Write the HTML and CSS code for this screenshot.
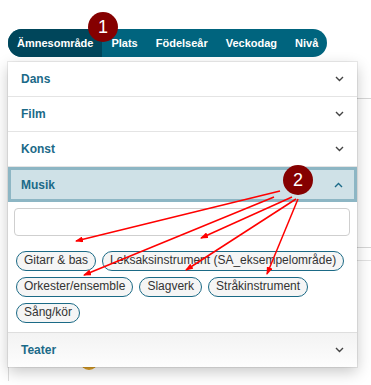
FILE: index.html
```html
<!DOCTYPE html>
<html lang="sv">
<head>
    <meta charset="UTF-8">
    <meta name="viewport" content="width=device-width, initial-scale=1.0">
    <title>Filter</title>
    <link rel="stylesheet" href="styles.css">
</head>
<body>

    <nav class="tabs">
        <span class="tab active">Ämnesområde</span>
        <span class="tab">Plats</span>
        <span class="tab">Födelseår</span>
        <span class="tab">Veckodag</span>
        <span class="tab">Nivå</span>
    </nav>

    <!-- page content behind the dropdown -->
    <div class="content">
        <div class="content-row first"></div>
        <div class="content-row second"></div>
        <div class="content-row third"></div>
        <div class="content-foot"><span class="avatar"></span></div>
    </div>

    <div class="dropdown">
        <div class="acc-head">
            <span>Dans</span>
            <svg class="chev" width="9" height="6" viewBox="0 0 9 6"><polyline points="1,1 4.5,4.5 8,1"/></svg>
        </div>
        <div class="acc-head">
            <span>Film</span>
            <svg class="chev" width="9" height="6" viewBox="0 0 9 6"><polyline points="1,1 4.5,4.5 8,1"/></svg>
        </div>
        <div class="acc-head">
            <span>Konst</span>
            <svg class="chev" width="9" height="6" viewBox="0 0 9 6"><polyline points="1,1 4.5,4.5 8,1"/></svg>
        </div>
        <div class="acc-head open">
            <span>Musik</span>
            <svg class="chev" width="9" height="6" viewBox="0 0 9 6"><polyline points="1,5 4.5,1.5 8,5"/></svg>
        </div>
        <div class="acc-body">
            <input class="search" type="text">
            <div class="chips">
                <span class="chip">Gitarr &amp; bas</span>
                <span class="chip">Leksaksinstrument (SA_eksempelområde)</span>
                <span class="chip">Orkester/ensemble</span>
                <span class="chip">Slagverk</span>
                <span class="chip">Stråkinstrument</span>
                <span class="chip">Sång/kör</span>
            </div>
        </div>
        <div class="acc-head last">
            <span>Teater</span>
            <svg class="chev" width="9" height="6" viewBox="0 0 9 6"><polyline points="1,1 4.5,4.5 8,1"/></svg>
        </div>
    </div>

    <!-- annotations -->
    <svg class="arrows" width="371" height="385" viewBox="0 0 371 385">
        <defs>
            <marker id="head" markerWidth="8" markerHeight="6" refX="7" refY="3" orient="auto" markerUnits="userSpaceOnUse">
                <polygon points="0,0 8,3 0,6" fill="#ff0000"/>
            </marker>
        </defs>
        <line x1="280" y1="191" x2="76" y2="241" marker-end="url(#head)"/>
        <line x1="274" y1="197" x2="84" y2="275" marker-end="url(#head)"/>
        <line x1="292" y1="197" x2="201" y2="238" marker-end="url(#head)"/>
        <line x1="296" y1="199" x2="186" y2="270" marker-end="url(#head)"/>
        <line x1="298" y1="199" x2="267" y2="274" marker-end="url(#head)"/>
    </svg>
    <span class="badge one">1</span>
    <span class="badge two">2</span>

</body>
</html>
```

FILE: styles.css
```css
body {
    margin: 0;
    width: 371px;
    height: 385px;
    overflow: hidden;
    position: relative;
    background-color: #fff;
    font-family: "Liberation Sans", Arial, sans-serif;
}

/* Top tab bar */
.tabs {
    display: inline-flex;
    margin: 29px 0 0 8px;
    height: 28px;
    border-radius: 14px;
    overflow: hidden;
    background-color: #00647e;
}

.tab {
    padding: 0 9px;
    line-height: 28px;
    color: #fff;
    font-size: 11px;
    font-weight: bold;
}

.tab.active {
    background-color: #00465b;
}

/* Content behind the dropdown */
.content {
    margin: 5px 0 0 8px;
    border-left: 1px solid #dcdcdc;
}

.content-row {
    border-bottom: 1px solid #d6d6d6;
}

.content-row.first { height: 36px; }
.content-row.second { height: 148px; }
.content-row.third { height: 12px; border-bottom-color: #e2e2e2; }

.content-foot {
    height: 120px;
    padding: 91px 0 0 71px;
    box-sizing: border-box;
}

.avatar {
    display: block;
    width: 18px;
    height: 18px;
    border-radius: 50%;
    background-color: #e0a228;
}

/* Dropdown panel */
.dropdown {
    position: absolute;
    top: 62px;
    left: 8px;
    width: 349px;
    background-color: #fff;
    box-shadow: 0 0 0 1px rgba(0, 0, 0, 0.07), 0 5px 14px rgba(0, 0, 0, 0.22);
}

.acc-head {
    display: flex;
    justify-content: space-between;
    align-items: center;
    height: 34px;
    padding: 0 13px 0 13px;
    border-bottom: 1px solid #e4e4e4;
    color: #1b6a88;
    font-size: 12px;
    font-weight: bold;
}

.acc-head.open {
    height: 35px;
    box-sizing: border-box;
    padding: 0 11px 0 10px;
    border: 3px solid #8db6c4;
    background-color: #cfe1e7;
}

.acc-head.last {
    height: 34px;
    border-bottom: none;
    border-top: 1px solid #dedede;
    background: linear-gradient(#f3f3f3, #fdfdfd);
}

.chev {
    fill: none;
    stroke: #444;
    stroke-width: 1.4;
}

.acc-head.open .chev {
    stroke: #1b6a88;
}

.acc-body {
    padding: 6px 6px 9px 6px;
}

.search {
    display: block;
    box-sizing: border-box;
    width: 336px;
    height: 28px;
    margin: 0 0 15px 0;
    border: 1px solid #cfcfcf;
    border-radius: 4px;
}

.chips {
    display: flex;
    flex-wrap: wrap;
    gap: 6px;
    padding-left: 2px;
}

.chip {
    box-sizing: border-box;
    height: 20px;
    line-height: 17px;
    padding: 0 7px;
    border: 1.5px solid #1b6a86;
    border-radius: 10px;
    background-color: #f5f5f5;
    color: #333;
    font-size: 12px;
}

/* Annotation overlay */
.arrows {
    position: absolute;
    top: 0;
    left: 0;
    pointer-events: none;
}

.arrows line {
    stroke: #ff0000;
    stroke-width: 1.5;
}

.badge {
    position: absolute;
    width: 30px;
    height: 30px;
    border-radius: 50%;
    background-color: #850000;
    color: #fff;
    font-size: 18px;
    line-height: 30px;
    text-align: center;
}

.badge.one { top: 12px; left: 88px; }
.badge.two { top: 165px; left: 283px; }
```
